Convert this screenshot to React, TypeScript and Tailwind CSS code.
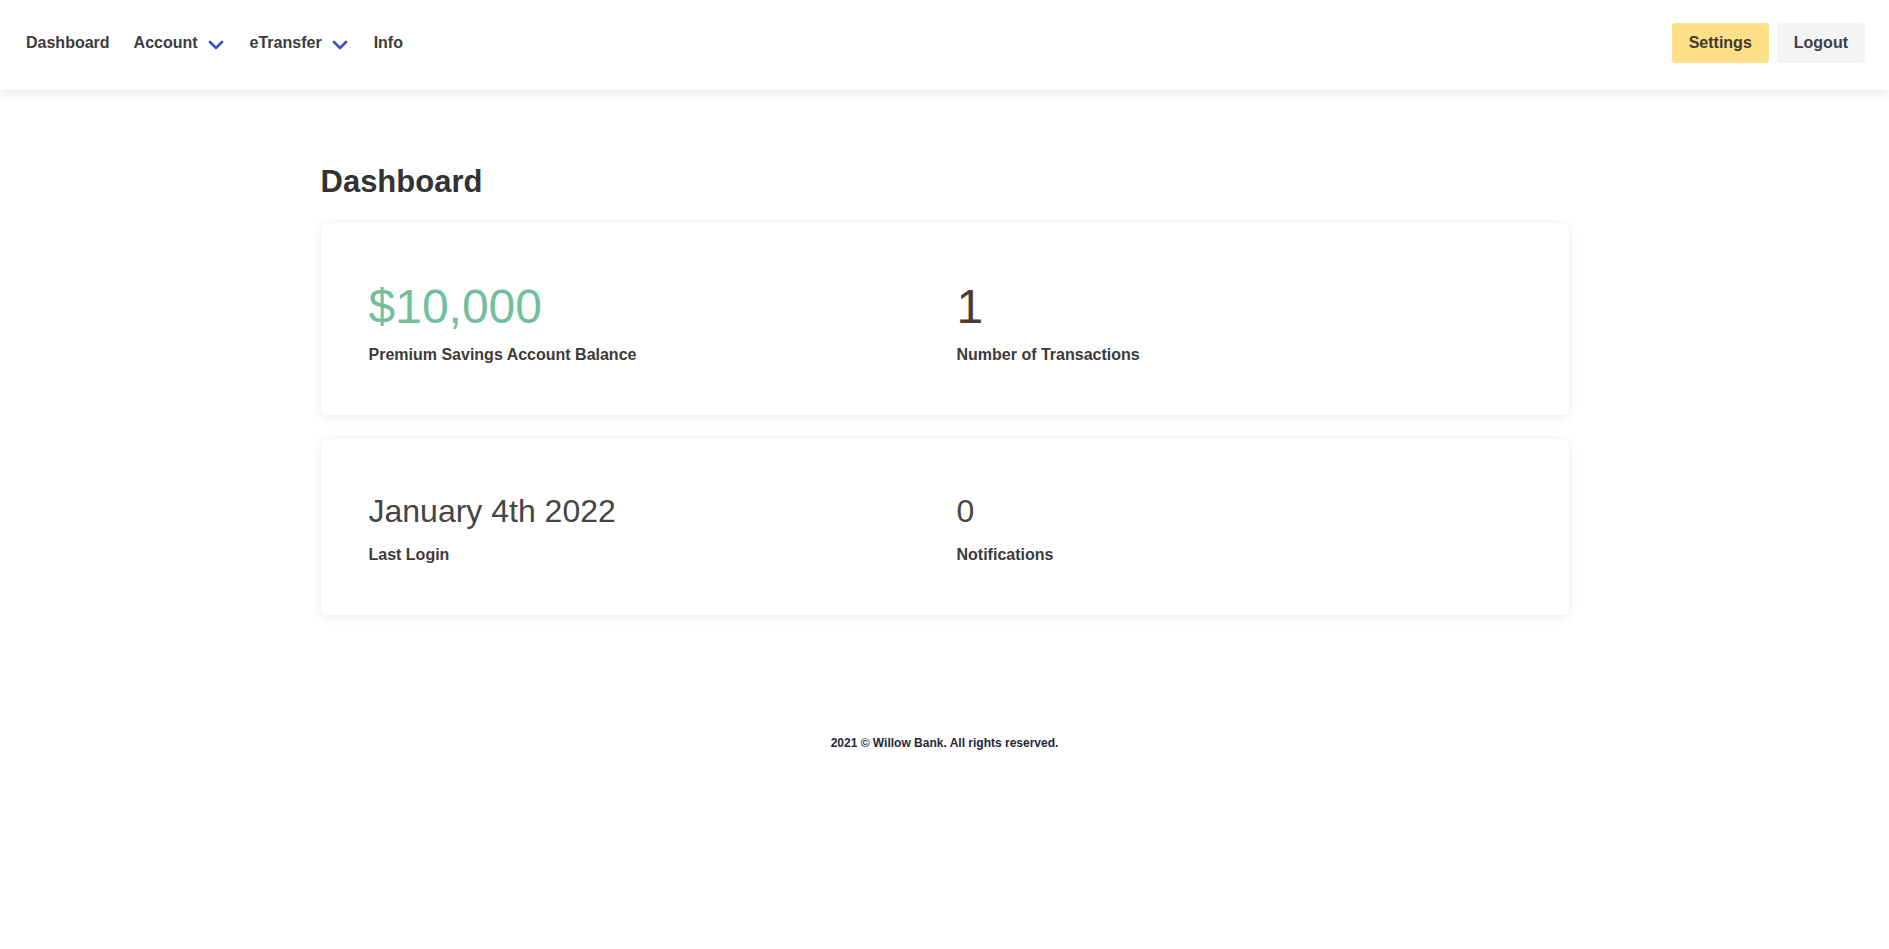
import React from 'react';

const navItems = [
  { label: 'Dashboard', dropdown: false },
  { label: 'Account', dropdown: true },
  { label: 'eTransfer', dropdown: true },
  { label: 'Info', dropdown: false },
];

function Chevron() {
  return (
    <svg width="16" height="10" viewBox="0 0 16 10" fill="none" className="ml-[10px] mr-[2px] mt-[3px]">
      <path d="M2 2l6 6 6-6" stroke="#3f4fc4" strokeWidth="2.6" strokeLinecap="round" strokeLinejoin="round" />
    </svg>
  );
}

function Stat({ value, label, valueClass }: { value: string; label: string; valueClass: string }) {
  return (
    <div>
      <div className={valueClass}>{value}</div>
      <div className="text-base leading-6 font-bold text-[#3b3b3b]">{label}</div>
    </div>
  );
}

export default function App() {
  return (
    <div className="min-h-screen bg-white font-['Liberation_Sans',Arial,sans-serif]">
      {/* Top nav */}
      <header className="bg-white shadow-[0_3px_10px_rgba(0,0,0,0.09)] flex items-center justify-between pl-[26px] pr-6 pt-[23px] pb-[27px]">
        <nav className="flex items-center gap-6">
          {navItems.map((item) => (
            <div key={item.label} className="flex items-center text-base font-bold text-[#3c3c3c]">
              {item.label}
              {item.dropdown && <Chevron />}
            </div>
          ))}
        </nav>
        <div className="flex items-center gap-2">
          <button className="h-10 px-[17px] rounded bg-[#ffdf88] text-base font-bold text-[#3d3a30]">
            Settings
          </button>
          <button className="h-10 px-[17px] rounded bg-[#f4f4f4] text-base font-bold text-[#3e3e4c]">
            Logout
          </button>
        </div>
      </header>

      {/* Main */}
      <main className="w-[1248px] mx-auto pt-[69px]">
        <h1 className="text-[31px] leading-[46px] font-bold text-[#333] mb-[18px]">Dashboard</h1>

        <div className="flex flex-col gap-6">
          <div className="bg-white rounded-md shadow-[0_2px_12px_rgba(0,0,0,0.09)] p-12 grid grid-cols-2 gap-6">
            <Stat
              value="$10,000"
              label="Premium Savings Account Balance"
              valueClass="text-[48px] leading-[72px] text-[#72bf9e]"
            />
            <Stat
              value="1"
              label="Number of Transactions"
              valueClass="text-[48px] leading-[72px] text-[#4a3b33]"
            />
          </div>

          <div className="bg-white rounded-md shadow-[0_2px_12px_rgba(0,0,0,0.09)] p-12 grid grid-cols-2 gap-6">
            <Stat
              value="January 4th 2022"
              label="Last Login"
              valueClass="text-[32px] leading-[48px] mb-2 text-[#454545]"
            />
            <Stat
              value="0"
              label="Notifications"
              valueClass="text-[32px] leading-[48px] mb-2 text-[#4a4644]"
            />
          </div>
        </div>
      </main>

      {/* Footer */}
      <footer className="pt-[120px] text-center text-xs font-bold text-[#1e2838]">
        2021 © Willow Bank. All rights reserved.
      </footer>
    </div>
  );
}
